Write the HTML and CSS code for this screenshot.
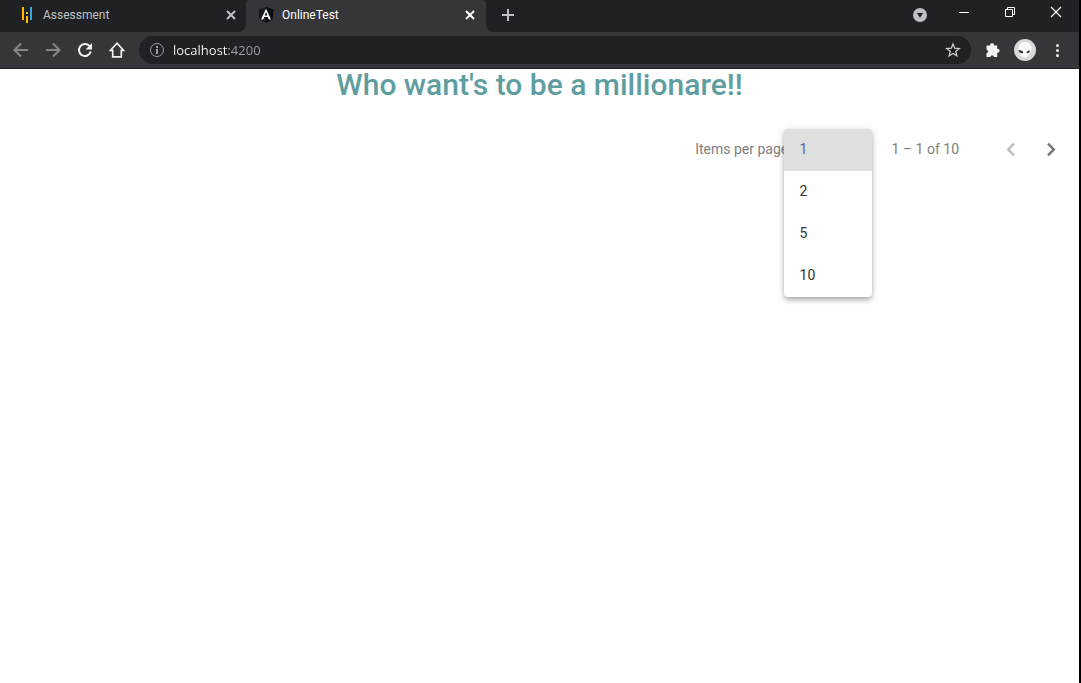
FILE: index.html
```
<!DOCTYPE html>
<html lang="en">
<head>
<meta charset="utf-8">
<meta name="viewport" content="width=device-width, initial-scale=1">
<title>OnlineTest</title>
<link rel="stylesheet" href="styles.css">
</head>
<body>
<div class="window">
  <header class="browser">
    <div class="tabstrip">
      <div class="tab tab-first">
        <svg class="favicon" viewBox="0 0 16 16" aria-hidden="true"><path fill="#ffb900" d="M3 0h2v13H3zM7 5h2v2H7zM7 9h2v7H7z"/><path fill="#38a3e0" d="M11 0h2v13h-2z"/></svg>
        <span class="tab-title">Assessment</span>
        <button class="tab-close" aria-label="Close Assessment"><svg viewBox="0 0 10 10"><path d="M1 1l8 8M9 1l-8 8"/></svg></button>
      </div>
      <div class="tab tab-active">
        <svg class="favicon" viewBox="0 0 16 16" aria-hidden="true"><path fill="#17191f" d="M8 0l7.500 2.600-1.100 9.800L8 16l-6.400-3.600L.5 2.600z"/><path fill="#0b0d16" d="M8 0l7.500 2.600-1.100 9.800L8 16z"/><path fill="#fff" fill-rule="evenodd" d="M8 1.700L3 12.500H5.200L6.200 10h3.600l1 2.500H13zM8 5.100l1.400 3.400H6.600z"/></svg>
        <span class="tab-title">OnlineTest</span>
        <button class="tab-close" aria-label="Close OnlineTest"><svg viewBox="0 0 10 10"><path d="M1 1l8 8M9 1l-8 8"/></svg></button>
      </div>
      <button class="new-tab" aria-label="New tab"><svg viewBox="0 0 12 12"><path d="M6 0v12M0 6h12"/></svg></button>
      <div class="window-controls">
        <button class="tab-search" aria-label="Search tabs"><svg viewBox="0 0 14 14"><circle cx="7" cy="7" r="7" fill="#bdc1c6"/><path fill="#202124" d="M3.800 5h6.400L7 9.700z"/></svg></button>
        <button class="caption" aria-label="Minimize"><svg viewBox="0 0 12 12"><path d="M1 6.500h10"/></svg></button>
        <button class="caption" aria-label="Restore"><svg viewBox="0 0 12 12"><path d="M1.500 3.500h7v7h-7zM3.500 3.500v-2h7v7h-2"/></svg></button>
        <button class="caption" aria-label="Close"><svg viewBox="0 0 12 12"><path stroke-width="1.200" d="M1 1l10 10M11 1L1 11"/></svg></button>
      </div>
    </div>
    <div class="toolbar">
      <button class="tool dim" aria-label="Back"><svg viewBox="0 0 16 16"><path d="M15 8H2M8 1.500L1.500 8 8 14.500"/></svg></button>
      <button class="tool dim" aria-label="Forward"><svg viewBox="0 0 16 16"><path d="M1 8h13M8 1.500L14.500 8 8 14.500"/></svg></button>
      <button class="tool" aria-label="Reload"><svg viewBox="0 0 16 16"><path d="M13.800 9.600A6 6 0 1 1 12.400 3.900"/><path class="solid" d="M15 1v6.500H8.500z"/></svg></button>
      <button class="tool" aria-label="Home"><svg viewBox="0 0 16 16"><path stroke-width="1.700" d="M8 1.200L1.500 8.300h2.200v6.500h8.600V8.300h2.200z"/></svg></button>
      <div class="omnibox">
        <button class="omni-icon" aria-label="View site information"><svg viewBox="0 0 16 16"><circle cx="8" cy="8" r="6.500"/><path d="M8 7v5M8 4v2"/></svg></button>
        <input class="address" type="text" aria-label="Address" value="localhost:4200">
        <button class="omni-icon star" aria-label="Bookmark this tab"><svg viewBox="0 0 16 16"><path d="M8 2l1.700 4.200 4.500.3-3.500 2.900 1.200 4.400L8 11.400l-3.900 2.400 1.200-4.400L1.800 6.500l4.500-.3z"/></svg></button>
      </div>
      <button class="tool" aria-label="Extensions"><svg viewBox="0 0 16 16"><path class="solid" d="M2 3.500h3.200a1.900 1.900 0 1 1 3.700 0h3.300v3.400a1.900 1.900 0 1 1 0 3.700V15H9a1.900 1.900 0 0 0-3.700 0H1.500v-3.700a1.900 1.900 0 0 0 0-3.700V3.500z"/></svg></button>
      <button class="avatar" aria-label="Profile"><svg viewBox="0 0 22 22"><circle cx="11" cy="11" r="11" fill="#d8d8d8"/><path fill="#fafafa" d="M11 3c4.500 0 7 3.300 6.500 7.500-.4 4-3.500 8-6.500 8s-6.100-4-6.500-8C4 6.300 6.500 3 11 3z"/><path fill="#34363a" d="M4.500 11c2.800 0 4.800 1 4.800 3-2 .8-4.500-.2-4.800-3zM16 11.500c-2.300 0-3.500 1-3.500 2.500 1.700.6 3.300-.5 3.500-2.500z"/></svg></button>
      <button class="tool" aria-label="Menu"><svg viewBox="0 0 16 16"><circle class="solid" cx="8.500" cy="3.500" r="1.500"/><circle class="solid" cx="8.500" cy="8.500" r="1.500"/><circle class="solid" cx="8.500" cy="13.500" r="1.500"/></svg></button>
    </div>
  </header>
  <main class="page">
    <h1 class="title">Who want's to be a millionare!!</h1>
    <div class="paginator">
      <label class="size-label" for="page-size">Items per page:</label>
      <div class="size-field">
        <select class="size-select" id="page-size"><option>1</option><option>2</option><option>5</option><option>10</option></select>
        <div class="size-menu" role="listbox" aria-label="Items per page">
          <button class="size-option selected" role="option" aria-selected="true">1</button>
          <button class="size-option" role="option" aria-selected="false">2</button>
          <button class="size-option" role="option" aria-selected="false">5</button>
          <button class="size-option" role="option" aria-selected="false">10</button>
        </div>
      </div>
      <span class="range">1 – 1 of 10</span>
      <button class="pager" aria-label="Previous page" disabled><svg viewBox="0 0 24 24"><path d="M15.900 7.500L14.200 5.800 7.500 12.500l6.700 6.700 1.700-1.700-5-5z"/></svg></button>
      <button class="pager" aria-label="Next page"><svg viewBox="0 0 24 24"><path d="M9.800 5.800L8.100 7.500l5 5-5 5 1.700 1.700 6.700-6.700z"/></svg></button>
    </div>
  </main>
</div>
</body>
</html>
```
FILE: styles.css
```
* { box-sizing: border-box; }
body { margin: 0; background: #fff; font-family: Roboto, "Liberation Sans", sans-serif; }
button { padding: 0; border: 0; background: none; font: inherit; color: inherit; }
svg { display: block; }

.window { min-height: 100vh; border-right: 2px solid #000; }

/* Browser frame */
.browser { color: #e8eaed; background: #35363a; border-bottom: 1px solid #202124; }
.tabstrip { display: flex; height: 32px; background: linear-gradient(#202124 16px, #35363a 16px); }
.tab { display: flex; align-items: center; height: 32px; padding-bottom: 2px; font-size: 12px; }
.tab-first { width: 246px; padding-left: 19px; padding-right: 10px; background: #202124; border-bottom-right-radius: 8px; color: #bdc1c6; }
.tab-active { width: 240px; padding-left: 12px; padding-right: 11px; background: #35363a; border-radius: 4px 4px 0 0; color: #fff; }
.favicon { width: 16px; height: 16px; margin-right: 8px; }
.tab-title { flex: 1; }
.tab-close svg { width: 10px; height: 10px; fill: none; stroke: currentColor; stroke-width: 2; }
.new-tab { width: 44px; padding-left: 16px; padding-bottom: 2px; background: #202124; border-bottom-left-radius: 8px; color: #bdc1c6; }
.new-tab svg { width: 12px; height: 12px; stroke: currentColor; stroke-width: 2; }
.window-controls { display: flex; flex: 1; justify-content: flex-end; background: #202124; }
.tab-search { width: 42px; padding-bottom: 2px; }
.tab-search svg { width: 14px; height: 14px; margin: auto; }
.caption { width: 46px; padding-bottom: 8px; color: #fff; }
.caption svg { width: 12px; height: 12px; margin: auto; fill: none; stroke: currentColor; }
.toolbar { display: flex; align-items: center; height: 36px; padding-left: 5px; padding-right: 6px; }
.tool { width: 32px; height: 32px; color: #f1f3f4; }
.tool svg { width: 16px; height: 16px; margin: auto; fill: none; stroke: currentColor; stroke-width: 2; }
.tool .solid { fill: currentColor; stroke: none; }
.dim { color: #85878a; }
.omnibox { display: flex; flex: 1; align-items: center; height: 28px; margin: 0 6px; padding: 0 10px; border-radius: 14px; background: #202124; }
.omni-icon { color: #9aa0a6; }
.omni-icon svg { width: 16px; height: 16px; fill: none; stroke: currentColor; stroke-width: 2; }
.omni-icon circle { stroke-width: 1; }
.star { color: #c8cace; }
.star svg { stroke-width: 1.300; }
.address { flex: 1; min-width: 0; margin: 0 8px; padding: 0; border: 0; outline: 0; font: 13px "Open Sans", "Noto Sans", sans-serif; color: transparent; background: linear-gradient(to right, #fff 56px, #9aa0a6 56px); background-clip: text; -webkit-background-clip: text; }
.avatar { margin: 0 5px; }
.avatar svg { width: 22px; height: 22px; }

/* Page */
.title { margin: 0; font-size: 30px; font-weight: 500; line-height: 32px; text-align: center; color: #5f9ea0; }
.paginator { display: flex; align-items: center; justify-content: flex-end; padding: 20px 8px 0; min-height: 76px; font-size: 14px; color: #808080; }
.size-field { position: relative; width: 56px; height: 20px; margin: 0 36px 0 8px; }
.size-select { width: 56px; height: 20px; border: 0; padding: 0; background: none; font: inherit; color: inherit; appearance: none; }
.size-menu { position: absolute; top: -10px; left: -16px; width: 88px; display: flex; flex-direction: column; overflow: hidden; border-radius: 4px; background: #fff; box-shadow: 0 2px 4px -1px rgba(0,0,0,.2), 0 4px 5px rgba(0,0,0,.14), 0 1px 10px rgba(0,0,0,.12); }
.size-option { height: 42px; padding: 0 16px 2px; text-align: left; color: #333; }
.selected { background: #dfdfdf; color: #5563bd; }
.range { margin-right: 32px; }
.pager { width: 40px; height: 40px; color: #757575; }
.pager svg { width: 24px; height: 24px; margin: auto; fill: currentColor; }
.pager:disabled { color: #bdbdbd; }
```
